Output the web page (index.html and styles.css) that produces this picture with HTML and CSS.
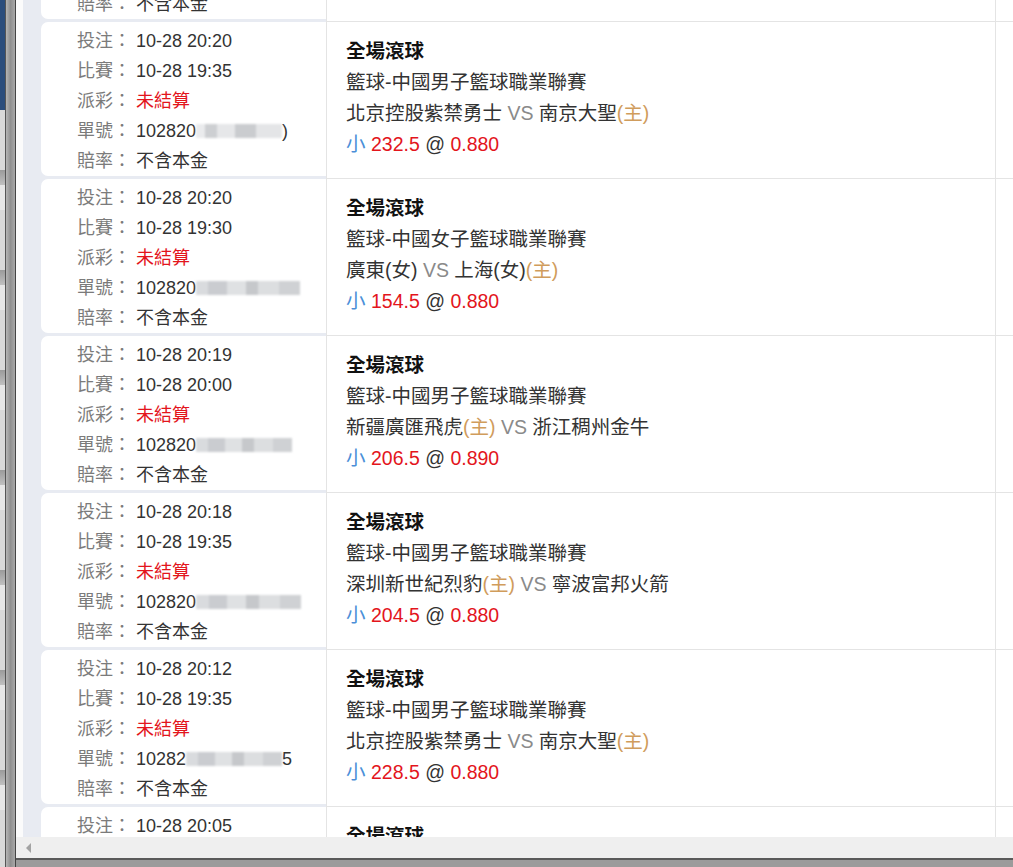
FILE: index.html
```html
<!DOCTYPE html>
<html lang="zh-Hant">
<head>
    <meta charset="UTF-8">
    <meta name="viewport" content="width=device-width, initial-scale=1.0">
    <title>注單紀錄</title>
    <link rel="stylesheet" href="styles.css">
</head>
<body>
    <div class="desktop">
        <div class="behind">
            <div class="behind-top"></div>
            <div class="behind-rest"></div>
        </div>
        <div class="frame"></div>
        <div class="window">
            <div class="viewport">
                <div class="page">
                    <div class="list">

                        <div class="bet">
                            <div class="bet-info"><div class="card">
                                <p><span class="k">投注：</span> <span class="v">10-28 20:21</span></p>
                                <p><span class="k">比賽：</span> <span class="v">10-28 19:35</span></p>
                                <p><span class="k">派彩：</span> <span class="red">未結算</span></p>
                                <p><span class="k">單號：</span> <span class="v">102820<span class="mask"></span></span></p>
                                <p><span class="k">賠率：</span> <span class="v">不含本金</span></p>
                            </div></div>
                            <div class="bet-detail">
                                <p class="market">全場滾球</p>
                                <p>籃球-中國男子籃球職業聯賽</p>
                                <p>北京控股紫禁勇士 <span class="vs">VS</span> 南京大聖<span class="home">(主)</span></p>
                                <p><span class="side">大</span> <span class="red">232.5</span> @ <span class="red">0.880</span></p>
                            </div>
                            <div class="bet-extra"></div>
                        </div>

                        <div class="bet">
                            <div class="bet-info"><div class="card">
                                <p><span class="k">投注：</span> <span class="v">10-28 20:20</span></p>
                                <p><span class="k">比賽：</span> <span class="v">10-28 19:35</span></p>
                                <p><span class="k">派彩：</span> <span class="red">未結算</span></p>
                                <p><span class="k">單號：</span> <span class="v">102820<span class="mask m1"></span>)</span></p>
                                <p><span class="k">賠率：</span> <span class="v">不含本金</span></p>
                            </div></div>
                            <div class="bet-detail">
                                <p class="market">全場滾球</p>
                                <p>籃球-中國男子籃球職業聯賽</p>
                                <p>北京控股紫禁勇士 <span class="vs">VS</span> 南京大聖<span class="home">(主)</span></p>
                                <p><span class="side">小</span> <span class="red">232.5</span> @ <span class="red">0.880</span></p>
                            </div>
                            <div class="bet-extra"></div>
                        </div>

                        <div class="bet">
                            <div class="bet-info"><div class="card">
                                <p><span class="k">投注：</span> <span class="v">10-28 20:20</span></p>
                                <p><span class="k">比賽：</span> <span class="v">10-28 19:30</span></p>
                                <p><span class="k">派彩：</span> <span class="red">未結算</span></p>
                                <p><span class="k">單號：</span> <span class="v">102820<span class="mask m2"></span></span></p>
                                <p><span class="k">賠率：</span> <span class="v">不含本金</span></p>
                            </div></div>
                            <div class="bet-detail">
                                <p class="market">全場滾球</p>
                                <p>籃球-中國女子籃球職業聯賽</p>
                                <p>廣東(女) <span class="vs">VS</span> 上海(女)<span class="home">(主)</span></p>
                                <p><span class="side">小</span> <span class="red">154.5</span> @ <span class="red">0.880</span></p>
                            </div>
                            <div class="bet-extra"></div>
                        </div>

                        <div class="bet">
                            <div class="bet-info"><div class="card">
                                <p><span class="k">投注：</span> <span class="v">10-28 20:19</span></p>
                                <p><span class="k">比賽：</span> <span class="v">10-28 20:00</span></p>
                                <p><span class="k">派彩：</span> <span class="red">未結算</span></p>
                                <p><span class="k">單號：</span> <span class="v">102820<span class="mask m3"></span></span></p>
                                <p><span class="k">賠率：</span> <span class="v">不含本金</span></p>
                            </div></div>
                            <div class="bet-detail">
                                <p class="market">全場滾球</p>
                                <p>籃球-中國男子籃球職業聯賽</p>
                                <p>新疆廣匯飛虎<span class="home">(主)</span> <span class="vs">VS</span> 浙江稠州金牛</p>
                                <p><span class="side">小</span> <span class="red">206.5</span> @ <span class="red">0.890</span></p>
                            </div>
                            <div class="bet-extra"></div>
                        </div>

                        <div class="bet">
                            <div class="bet-info"><div class="card">
                                <p><span class="k">投注：</span> <span class="v">10-28 20:18</span></p>
                                <p><span class="k">比賽：</span> <span class="v">10-28 19:35</span></p>
                                <p><span class="k">派彩：</span> <span class="red">未結算</span></p>
                                <p><span class="k">單號：</span> <span class="v">102820<span class="mask m4"></span></span></p>
                                <p><span class="k">賠率：</span> <span class="v">不含本金</span></p>
                            </div></div>
                            <div class="bet-detail">
                                <p class="market">全場滾球</p>
                                <p>籃球-中國男子籃球職業聯賽</p>
                                <p>深圳新世紀烈豹<span class="home">(主)</span> <span class="vs">VS</span> 寧波富邦火箭</p>
                                <p><span class="side">小</span> <span class="red">204.5</span> @ <span class="red">0.880</span></p>
                            </div>
                            <div class="bet-extra"></div>
                        </div>

                        <div class="bet">
                            <div class="bet-info"><div class="card">
                                <p><span class="k">投注：</span> <span class="v">10-28 20:12</span></p>
                                <p><span class="k">比賽：</span> <span class="v">10-28 19:35</span></p>
                                <p><span class="k">派彩：</span> <span class="red">未結算</span></p>
                                <p><span class="k">單號：</span> <span class="v">10282<span class="mask m5"></span>5</span></p>
                                <p><span class="k">賠率：</span> <span class="v">不含本金</span></p>
                            </div></div>
                            <div class="bet-detail">
                                <p class="market">全場滾球</p>
                                <p>籃球-中國男子籃球職業聯賽</p>
                                <p>北京控股紫禁勇士 <span class="vs">VS</span> 南京大聖<span class="home">(主)</span></p>
                                <p><span class="side">小</span> <span class="red">228.5</span> @ <span class="red">0.880</span></p>
                            </div>
                            <div class="bet-extra"></div>
                        </div>

                        <div class="bet">
                            <div class="bet-info"><div class="card">
                                <p><span class="k">投注：</span> <span class="v">10-28 20:05</span></p>
                                <p><span class="k">比賽：</span> <span class="v">10-28 19:35</span></p>
                                <p><span class="k">派彩：</span> <span class="red">未結算</span></p>
                                <p><span class="k">單號：</span> <span class="v">102820<span class="mask"></span></span></p>
                                <p><span class="k">賠率：</span> <span class="v">不含本金</span></p>
                            </div></div>
                            <div class="bet-detail">
                                <p class="market">全場滾球</p>
                                <p>籃球-中國男子籃球職業聯賽</p>
                                <p>北京控股紫禁勇士 <span class="vs">VS</span> 南京大聖<span class="home">(主)</span></p>
                                <p><span class="side">小</span> <span class="red">226.5</span> @ <span class="red">0.880</span></p>
                            </div>
                            <div class="bet-extra"></div>
                        </div>

                    </div>
                </div>
            </div>
            <div class="hscroll">
                <svg class="arrow" width="8" height="10" viewBox="0 0 8 10"><path d="M6 0 L6 10 L1 5 Z" fill="#a3a3a3"/></svg>
            </div>
            <div class="frame-bottom"></div>
        </div>
    </div>
</body>
</html>
```

FILE: styles.css
```css
* {
    box-sizing: border-box;
    margin: 0;
    padding: 0;
}

html,
body {
    height: 100%;
    overflow: hidden;
}

body {
    font-family: "Liberation Sans", "Noto Sans CJK TC", sans-serif;
    font-size: 18px;
    color: #333;
}

.desktop {
    display: flex;
    height: 100%;
}

/* window behind, only a sliver shows */
.behind {
    width: 5px;
    display: flex;
    flex-direction: column;
}

.behind-top {
    height: 110px;
    background: #2b4d7c;
}

.behind-rest {
    flex: 1;
    background: repeating-linear-gradient(#d8d8d8 0, #d8d8d8 60px, #9a9a9a 60px, #c0c0c0 75px, #e6e6e6 75px, #e6e6e6 100px);
}

.frame {
    width: 11px;
    border-left: 1px solid #555;
    border-right: 1px solid #444;
    background: linear-gradient(to right, #b5b5b5, #8f8f8f, #a8a8a8);
}

.window {
    flex: 1;
    display: flex;
    flex-direction: column;
    min-width: 0;
    background: #fbfbfb;
}

.viewport {
    flex: 1;
    overflow: hidden;
    padding-left: 7px;
}

.page {
    display: flow-root;
    height: 100%;
    background: #e8ebf2;
    padding-left: 18px;
}

/* list is scrolled, first row only shows its last line */
.list {
    margin-top: -135px;
}

.bet {
    display: grid;
    grid-template-columns: 285px 669px 1fr;
}

.bet-info {
    background: #e8ebf2;
}

.card {
    background: #fff;
    border-radius: 7px 0 0 7px;
    height: 154px;
    margin-bottom: 3px;
    padding: 4px 0 0 36px;
    line-height: 30px;
}

.card p {
    white-space: nowrap;
}

.k {
    color: #7b7b7b;
}

.v {
    color: #333;
}

.red {
    color: #e3151c;
}

.mask {
    display: inline-block;
    width: 100px;
    height: 14px;
    vertical-align: -1px;
    background: linear-gradient(to right, #d9dbde 0 12%, #caccd0 12% 30%, #dfe1e3 30% 48%, #c6c8cb 48% 60%, #dcdee0 60% 80%, #cfd1d4 80% 100%);
    filter: blur(1.2px);
}

.m1 { width: 86px; background: linear-gradient(to right, #eaebed 0 10%, #cdcfd2 10% 25%, #e6e7e9 25% 45%, #cacccf 45% 70%, #e4e5e7 70% 100%); }
.m2 { width: 104px; }
.m3 { width: 96px; }
.m4 { width: 105px; }
.m5 { width: 96px; }

.bet-detail {
    background: #fff;
    border-left: 1px solid #e4e4e4;
    border-bottom: 1px solid #e4e4e4;
    padding: 14px 0 0 19px;
    font-size: 19.5px;
    line-height: 31px;
}

.bet-detail p {
    white-space: nowrap;
}

.market {
    font-weight: bold;
    color: #111;
}

.vs {
    color: #8a8a8a;
}

.home {
    color: #d09c5c;
}

.side {
    color: #4a8fd8;
}

.bet-extra {
    background: #fff;
    border-left: 1px solid #e4e4e4;
    border-bottom: 1px solid #e4e4e4;
}

.hscroll {
    height: 21px;
    background: #efefef;
    display: flex;
    align-items: center;
    padding-left: 9px;
}

.frame-bottom {
    height: 9px;
    border-top: 2px solid #5a5a5a;
    background: #9b9b9b;
}
```
